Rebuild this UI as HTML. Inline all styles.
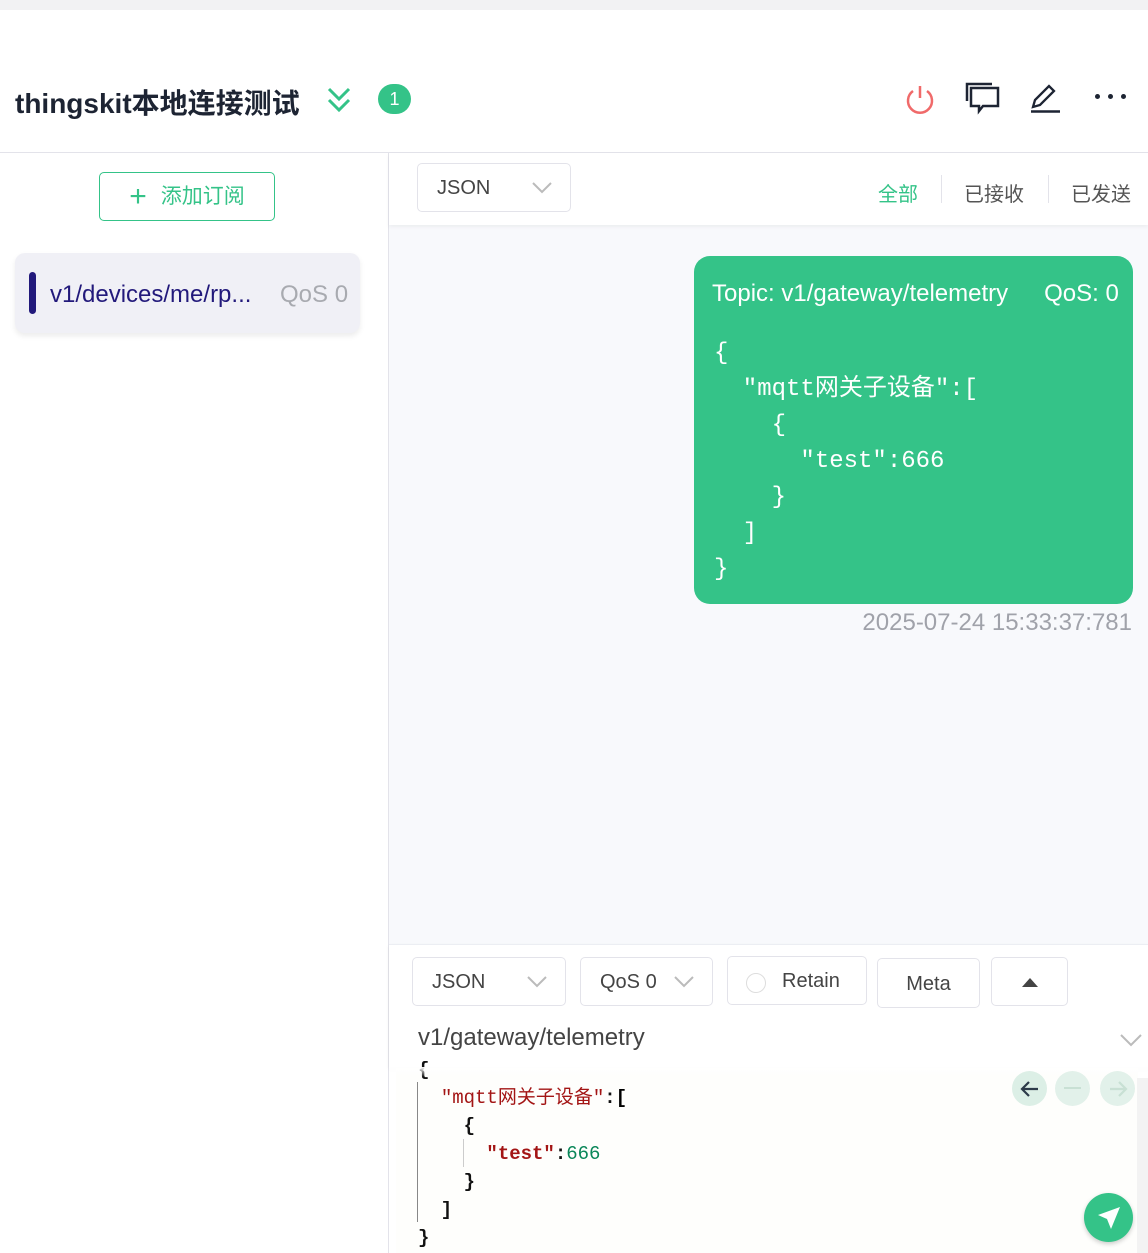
<!DOCTYPE html>
<html><head><meta charset="utf-8"><style>
*{box-sizing:border-box;margin:0;padding:0}
body{width:1148px;height:1253px;overflow:hidden;background:#fff;font-family:"Liberation Sans","Noto Sans CJK SC",sans-serif;position:relative}
.a{position:absolute}
.mono{font-family:"Liberation Mono","Noto Sans CJK SC",monospace}
.sel{border:1px solid #e3e3ea;border-radius:5px;background:#fff;color:#444;font-size:20px}
</style></head><body>
<div class="a" style="left:0;top:0;width:1148px;height:10px;background:#f2f2f3"></div>
<div class="a" style="left:15px;top:82px;font-size:28px;font-weight:bold;color:#1d2433">thingskit本地连接测试</div>
<svg class="a" style="left:326px;top:86px" width="26" height="28" viewBox="0 0 26 28"><path d="M3 3l10 10 10-10M3 14l10 10 10-10" fill="none" stroke="#34c388" stroke-width="3"/></svg>
<div class="a" style="left:378px;top:84px;width:33px;height:30px;border-radius:15px;background:#34c388;color:#fff;font-size:18px;text-align:center;line-height:31px">1</div>
<svg class="a" style="left:903px;top:83px" width="34" height="34" viewBox="0 0 34 34"><path d="M10 8a12 12 0 1 0 14 0" fill="none" stroke="#f06a6a" stroke-width="2.5"/><path d="M17 3v12" stroke="#f06a6a" stroke-width="2.5"/></svg>
<svg class="a" style="left:965px;top:82px" width="36" height="34" viewBox="0 0 36 34"><path d="M2 19V2h25" fill="none" stroke="#1d2433" stroke-width="2.5"/><path d="M6 6h27v18H18l-4 5v-5H6z" fill="none" stroke="#1d2433" stroke-width="2.5"/></svg>
<svg class="a" style="left:1029px;top:82px" width="34" height="32" viewBox="0 0 34 32"><path d="M4 25l2-7 14-14 5 5-14 14z" fill="none" stroke="#1d2433" stroke-width="2.3"/><path d="M2 29.5h29" stroke="#1d2433" stroke-width="2.5"/></svg>
<div class="a" style="left:1095px;top:94px;width:5px;height:5px;border-radius:3px;background:#1d2433;box-shadow:13px 0 #1d2433,26px 0 #1d2433"></div>
<div class="a" style="left:0;top:152px;width:1148px;height:1px;background:#e3e3ea"></div>
<div class="a" style="left:388px;top:153px;width:1px;height:1100px;background:#e3e3ea"></div>
<!-- sidebar -->
<div class="a" style="left:99px;top:172px;width:176px;height:49px;border:1px solid #34c388;border-radius:5px;color:#34c388;font-size:21px;line-height:47px;text-align:center"><span style="font-size:30px;vertical-align:-3px;margin-right:14px">+</span>添加订阅</div>
<div class="a" style="left:15px;top:253px;width:345px;height:80px;border-radius:10px;background:#f0f0f6;box-shadow:0 3px 6px rgba(0,0,0,0.08)"></div>
<div class="a" style="left:29px;top:272px;width:7px;height:42px;border-radius:4px;background:#22197b"></div>
<div class="a" style="left:50px;top:281px;font-size:24px;color:#22197b">v1/devices/me/rp...</div>
<div class="a" style="left:280px;top:281px;font-size:24px;color:#a8aab0">QoS 0</div>
<!-- right -->
<div class="a" style="left:389px;top:153px;width:759px;height:791px;background:#f8f9fc"></div>
<div class="a" style="left:389px;top:153px;width:759px;height:72px;background:#fff;box-shadow:0 2px 4px rgba(0,0,0,0.05)"></div>
<div class="a sel" style="left:417px;top:163px;width:154px;height:49px"><span class="a" style="left:19px;top:13px">JSON</span><svg class="a" style="left:114px;top:18px" width="20" height="12"><path d="M1 1l9 9 9-9" fill="none" stroke="#bbb" stroke-width="2"/></svg></div>
<div class="a" style="left:878px;top:178px;font-size:20px;color:#34c388">全部</div>
<div class="a" style="left:941px;top:175px;width:1px;height:28px;background:#e3e3ea"></div>
<div class="a" style="left:964px;top:178px;font-size:20px;color:#555">已接收</div>
<div class="a" style="left:1048px;top:175px;width:1px;height:28px;background:#e3e3ea"></div>
<div class="a" style="left:1071px;top:178px;font-size:20px;color:#555">已发送</div>
<div class="a" style="left:694px;top:256px;width:439px;height:348px;border-radius:16px;background:#34c388;color:#fff">
<div class="a" style="left:18px;top:24px;font-size:24px;white-space:nowrap">Topic: v1/gateway/telemetry<span style="margin-left:36px">QoS: 0</span></div>
<pre class="a mono" style="left:20px;top:80px;font-size:24px;line-height:36px;color:#fff">{
  "mqtt网关子设备":[
    {
      "test":666
    }
  ]
}</pre></div>
<div class="a" style="right:16px;top:609px;font-size:24px;color:#a0a2aa">2025-07-24 15:33:37:781</div>
<!-- bottom -->
<div class="a" style="left:389px;top:944px;width:759px;height:123px;background:#fff;border-top:1px solid #eceef3;box-shadow:0 2px 4px rgba(0,0,0,0.06)"></div>
<div class="a sel" style="left:412px;top:957px;width:154px;height:49px"><span class="a" style="left:19px;top:13px">JSON</span><svg class="a" style="left:114px;top:18px" width="20" height="12"><path d="M1 1l9 9 9-9" fill="none" stroke="#bbb" stroke-width="2"/></svg></div>
<div class="a sel" style="left:580px;top:957px;width:133px;height:49px"><span class="a" style="left:19px;top:13px">QoS 0</span><svg class="a" style="left:93px;top:18px" width="20" height="12"><path d="M1 1l9 9 9-9" fill="none" stroke="#bbb" stroke-width="2"/></svg></div>
<div class="a sel" style="left:727px;top:956px;width:140px;height:49px"><span class="a" style="left:18px;top:16px;width:20px;height:20px;border:1px solid #ddd;border-radius:10px"></span><span class="a" style="left:54px;top:13px">Retain</span></div>
<div class="a sel" style="left:877px;top:958px;width:103px;height:50px;text-align:center;line-height:50px">Meta</div>
<div class="a sel" style="left:991px;top:957px;width:77px;height:49px"><svg class="a" style="left:30px;top:19px" width="16" height="10"><path d="M0 10L8 1l8 9z" fill="#444"/></svg></div>
<div class="a" style="left:418px;top:1024px;font-size:24px;color:#444">v1/gateway/telemetry</div>
<svg class="a" style="left:1120px;top:1034px" width="22" height="14"><path d="M1 1l10 10 10-10" fill="none" stroke="#bbb" stroke-width="2"/></svg>
<div class="a" style="left:396px;top:1068px;width:742px;height:185px;background:#fefefc"></div>
<div class="a" style="left:417px;top:1082px;width:1px;height:140px;background:#888"></div>
<div class="a" style="left:463px;top:1139px;width:1px;height:28px;background:#ccc"></div>
<pre class="a mono" style="left:418px;top:1056px;font-size:19px;line-height:28px;color:#111;font-weight:bold">{
  <span style="color:#a31515;font-weight:normal">"mqtt网关子设备"</span>:<span style="color:#000">[</span>
    {
      <span style="color:#a31515">"test"</span>:<span style="color:#098658;font-weight:normal">666</span>
    }
  ]
}</pre>
<div class="a" style="left:389px;top:1067px;width:759px;height:10px;background:linear-gradient(#fff,rgba(255,255,255,0))"></div>
<div class="a" style="left:1012px;top:1071px;width:35px;height:35px;border-radius:18px;background:#dcefe6"><svg class="a" style="left:8px;top:9px" width="20" height="18"><path d="M18 9H3M9 2L2 9l7 7" fill="none" stroke="#2d3b4a" stroke-width="2.2"/></svg></div>
<div class="a" style="left:1055px;top:1071px;width:35px;height:35px;border-radius:18px;background:#e2f1ea"><div class="a" style="left:9px;top:16px;width:17px;height:2px;background:#c8e0d4"></div></div>
<div class="a" style="left:1100px;top:1071px;width:35px;height:35px;border-radius:18px;background:#e2f1ea"><svg class="a" style="left:8px;top:9px" width="20" height="18"><path d="M2 9h15M11 2l7 7-7 7" fill="none" stroke="#c8e0d4" stroke-width="2.2"/></svg></div>
<div class="a" style="left:1137px;top:1078px;width:11px;height:175px;background:#f3f3f3"></div>
<div class="a" style="left:1084px;top:1193px;width:49px;height:49px;border-radius:25px;background:#34c388;box-shadow:0 2px 5px rgba(0,0,0,0.2)"><svg class="a" style="left:12px;top:12px" width="26" height="26" viewBox="0 0 26 26"><path d="M24 2L2 10l9 4 4 10z" fill="#fff"/></svg></div>
</body></html>
